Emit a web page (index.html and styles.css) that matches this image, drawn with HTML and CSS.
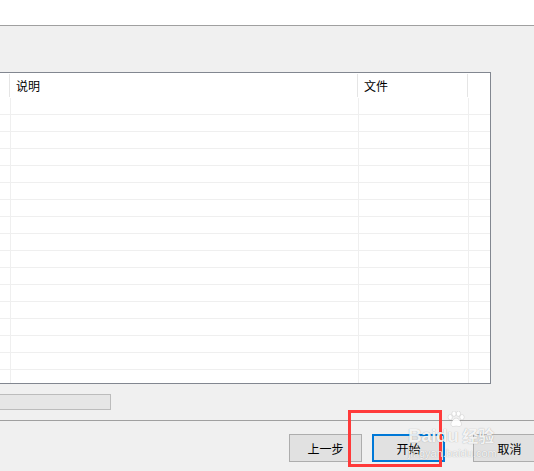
FILE: index.html
```html
<!DOCTYPE html>
<html lang="zh-CN">
<head>
  <meta charset="UTF-8">
  <meta name="viewport" content="width=device-width, initial-scale=1.0">
  <title>导入向导</title>
  <link rel="stylesheet" href="styles.css">
</head>
<body>
  <div class="top"></div>

  <div class="main">
    <div class="list">
      <div class="list-head">
        <div class="hcell"></div>
        <div class="hcell">说明</div>
        <div class="hcell">文件</div>
        <div class="hcell last"></div>
      </div>
      <div class="list-body">
        <div class="row"><div></div><div></div><div></div><div></div></div>
        <div class="row"><div></div><div></div><div></div><div></div></div>
        <div class="row"><div></div><div></div><div></div><div></div></div>
        <div class="row"><div></div><div></div><div></div><div></div></div>
        <div class="row"><div></div><div></div><div></div><div></div></div>
        <div class="row"><div></div><div></div><div></div><div></div></div>
        <div class="row"><div></div><div></div><div></div><div></div></div>
        <div class="row"><div></div><div></div><div></div><div></div></div>
        <div class="row"><div></div><div></div><div></div><div></div></div>
        <div class="row"><div></div><div></div><div></div><div></div></div>
        <div class="row"><div></div><div></div><div></div><div></div></div>
        <div class="row"><div></div><div></div><div></div><div></div></div>
        <div class="row"><div></div><div></div><div></div><div></div></div>
        <div class="row"><div></div><div></div><div></div><div></div></div>
        <div class="row"><div></div><div></div><div></div><div></div></div>
        <div class="row"><div></div><div></div><div></div><div></div></div>
        <div class="row"><div></div><div></div><div></div><div></div></div>
      </div>
    </div>

    <div class="progress"></div>
  </div>

  <div class="footer">
    <button class="btn">上一步</button>
    <button class="btn primary">开始</button>
    <button class="btn cancel">取消</button>
  </div>

  <div class="highlight"></div>

  <div class="watermark">
    <svg class="paw" width="18" height="16" viewBox="0 0 18 16">
      <ellipse cx="3.2" cy="6.2" rx="2.1" ry="2.7"/>
      <ellipse cx="7" cy="2.7" rx="2.1" ry="2.6"/>
      <ellipse cx="11.4" cy="2.7" rx="2.1" ry="2.6"/>
      <ellipse cx="15" cy="6.2" rx="2.1" ry="2.7"/>
      <path d="M9.2 7.2c-2.6 0-5.2 3.9-5.2 6.1 0 1.6 1.5 2.4 2.7 2.2 1-.2 1.6-.5 2.5-.5s1.5.3 2.5.5c1.2.2 2.7-.6 2.7-2.2 0-2.2-2.6-6.1-5.2-6.1z"/>
    </svg>
    <div class="brand"><span class="bd">Baidu</span><span class="jy">经验</span></div>
    <div class="url">jingyan.baidu.com</div>
  </div>
</body>
</html>
```

FILE: styles.css
```css
html, body {
  margin: 0;
  padding: 0;
}
body {
  width: 534px;
  height: 471px;
  overflow: hidden;
  background: #f0f0f0;
  font-family: "Noto Sans CJK SC", "Microsoft YaHei", sans-serif;
  font-size: 12px;
  color: #000;
  position: relative;
}
.top {
  height: 25px;
  background: #fff;
  border-bottom: 1px solid #a0a0a0;
}
.main {
  padding-top: 46px;
}
.list {
  box-sizing: border-box;
  width: 492px;
  height: 312px;
  margin-left: -1px;
  background: #fff;
  border: 1px solid #828790;
  overflow: hidden;
}
.list-head {
  display: grid;
  grid-template-columns: 10px 348px 110px 1fr;
  height: 25px;
}
.hcell {
  box-sizing: border-box;
  height: 23px;
  margin-top: 1px;
  border-right: 1px solid #e5e5e5;
  padding-left: 6px;
  line-height: 24px;
  white-space: nowrap;
}
.hcell.last {
  border-right: none;
}
.row {
  display: grid;
  grid-template-columns: 11px 348px 110px 1fr;
  height: 17px;
  box-sizing: border-box;
  border-bottom: 1px solid #efefef;
}
.row div {
  border-right: 1px solid #efefef;
}
.row div:last-child {
  border-right: none;
}
.progress {
  box-sizing: border-box;
  width: 112px;
  height: 16px;
  margin: 10px 0 0 -1px;
  background: #e6e6e6;
  border: 1px solid #bcbcbc;
}
.footer {
  margin-top: 10px;
  border-top: 1px solid #a0a0a0;
  display: flex;
  gap: 10px;
  padding: 13px 0 0 289px;
}
.btn {
  box-sizing: border-box;
  flex: none;
  width: 73px;
  height: 28px;
  padding: 0;
  background: #e1e1e1;
  border: 1px solid #adadad;
  font-family: inherit;
  font-size: 12px;
  color: #000;
}
.btn.primary {
  border: 2px solid #0078d7;
}
.btn.cancel {
  margin-left: 18px;
}
.highlight {
  position: absolute;
  left: 348px;
  top: 410px;
  width: 94px;
  height: 57px;
  box-sizing: border-box;
  border: 3px solid #ff3a3a;
}
.watermark {
  position: absolute;
  left: 408px;
  top: 411px;
  width: 110px;
  color: rgba(255, 255, 255, 0.9);
  text-shadow: 0 0 1px rgba(0, 0, 0, 0.35);
  pointer-events: none;
}
.paw {
  display: block;
  margin-left: 39px;
  fill: rgba(255, 255, 255, 0.9);
  stroke: rgba(0, 0, 0, 0.15);
  stroke-width: 0.6;
}
.brand {
  display: flex;
  align-items: baseline;
  margin-top: -2px;
  line-height: 20px;
  height: 20px;
  white-space: nowrap;
}
.bd {
  font-family: "Liberation Sans", Arial, sans-serif;
  font-weight: bold;
  font-size: 19px;
  letter-spacing: -0.5px;
}
.jy {
  margin-left: 4px;
  font-size: 16px;
  font-weight: bold;
}
.url {
  margin-top: 2px;
  font-family: "Liberation Sans", Arial, sans-serif;
  font-size: 11px;
  line-height: 12px;
  height: 12px;
  white-space: nowrap;
}
```
